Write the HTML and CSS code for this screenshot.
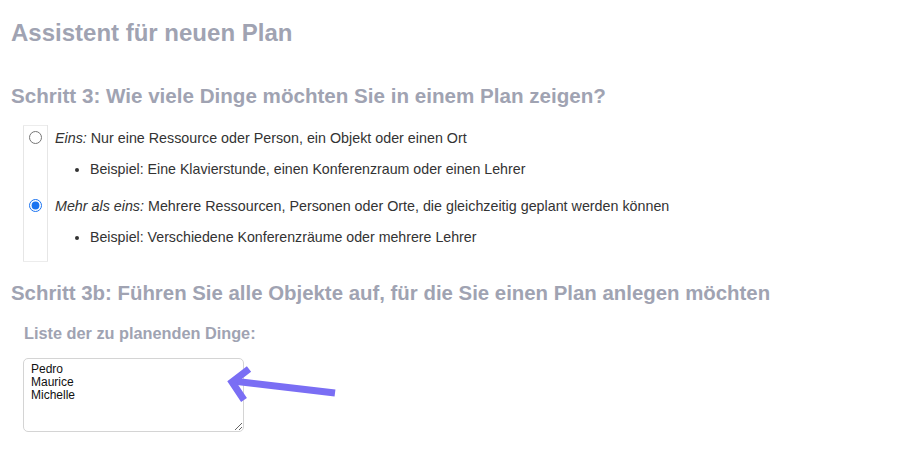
FILE: index.html
```html
<!DOCTYPE html>
<html lang="de">
<head>
<meta charset="utf-8">
<title>Assistent für neuen Plan</title>
<link rel="stylesheet" href="styles.css">
</head>
<body>
<div class="page">
  <h1 class="title">Assistent für neuen Plan</h1>
  <h2 class="step">Schritt 3: Wie viele Dinge möchten Sie in einem Plan zeigen?</h2>
  <table class="options">
    <tr>
      <td class="radio-cell"><input type="radio" name="count" class="radio"></td>
      <td class="option-cell">
        <p class="option"><em>Eins:</em> Nur eine Ressource oder Person, ein Objekt oder einen Ort</p>
        <ul class="examples"><li>Beispiel: Eine Klavierstunde, einen Konferenzraum oder einen Lehrer</li></ul>
      </td>
    </tr>
    <tr>
      <td class="radio-cell"><input type="radio" name="count" class="radio" checked></td>
      <td class="option-cell">
        <p class="option"><em>Mehr als eins:</em> Mehrere Ressourcen, Personen oder Orte, die gleichzeitig geplant werden können</p>
        <ul class="examples"><li>Beispiel: Verschiedene Konferenzräume oder mehrere Lehrer</li></ul>
      </td>
    </tr>
  </table>
  <h2 class="step step-b">Schritt 3b: Führen Sie alle Objekte auf, für die Sie einen Plan anlegen möchten</h2>
  <div class="field">
    <label class="field-label" for="things">Liste der zu planenden Dinge:</label>
    <textarea id="things" class="things">Pedro
Maurice
Michelle</textarea>
  </div>
  <svg class="arrow" width="120" height="50" viewBox="220 360 120 50" aria-hidden="true">
    <path d="M335 393 L233 381" stroke="#7a6ef4" stroke-width="7" fill="none" stroke-linecap="butt"/>
    <path d="M249 369 L232 382 L244 400" stroke="#7a6ef4" stroke-width="7" fill="none" stroke-linecap="butt" stroke-linejoin="miter"/>
  </svg>
</div>
</body>
</html>
```

FILE: styles.css
```css
* { box-sizing: border-box; }
html, body { margin: 0; padding: 0; background: #ffffff; }
body {
  font-family: "Liberation Sans", Arial, sans-serif;
  color: #333333;
}
.page {
  position: relative;
  width: 900px;
  height: 451px;
  padding: 19px 11px 0;
  overflow: hidden;
}
.title {
  margin: 0;
  font-size: 24px;
  line-height: 28px;
  font-weight: 700;
  color: #a0a3b2;
}
.step {
  margin: 37px 0 17px;
  font-size: 20.6px;
  line-height: 24px;
  font-weight: 700;
  color: #a0a3b2;
}
.step-b {
  margin: 19px 0 0;
  font-size: 20.4px;
}
.options {
  border-collapse: collapse;
  margin-left: 12px;
}
.radio-cell {
  width: 24px;
  padding: 0;
  vertical-align: top;
  border-left: 1px solid #e6e6e6;
  border-right: 1px solid #e6e6e6;
  text-align: center;
}
.options tr:first-child .radio-cell { border-top: 1px solid #ececec; }
.options tr:last-child .radio-cell { border-bottom: 1px solid #ececec; }
.radio {
  margin: 5px 0 0;
  width: 13px;
  height: 13px;
  accent-color: #1a73f0;
}
.option-cell {
  padding: 0 0 13px 7px;
  vertical-align: top;
}
.option {
  margin: 0;
  font-size: 14.3px;
  line-height: 24px;
}
.examples {
  margin: 7px 0 0;
  padding-left: 35px;
  font-size: 14.2px;
  line-height: 24px;
}
.field {
  display: flex;
  flex-direction: column;
  align-items: flex-start;
  padding-left: 12px;
  margin-top: 18px;
}
.field-label {
  font-size: 16.3px;
  line-height: 20px;
  font-weight: 700;
  color: #a0a3b2;
  margin: 0 0 15px 1px;
}
.things {
  width: 221px;
  height: 74px;
  border: 1px solid #d4d4d4;
  border-radius: 5px;
  padding: 4px 7px;
  font-family: "Liberation Sans", Arial, sans-serif;
  font-size: 12px;
  line-height: 13px;
  color: #111111;
  resize: both;
}
.arrow {
  position: absolute;
  left: 220px;
  top: 360px;
}
```
